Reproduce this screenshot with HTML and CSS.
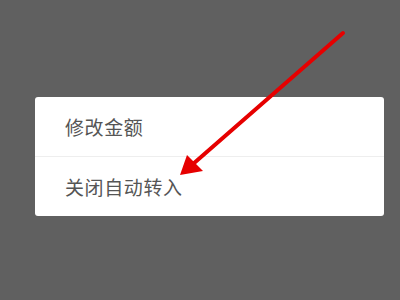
FILE: index.html
```html
<!DOCTYPE html>
<html lang="zh">
<head>
<meta charset="utf-8">
<link rel="stylesheet" href="styles.css">
</head>
<body>
<div class="screen">
  <div class="menu">
    <div class="item">修改金额</div>
    <div class="item">关闭自动转入</div>
  </div>
  <svg class="arrow" width="400" height="300" viewBox="0 0 400 300">
    <line x1="343" y1="33" x2="193" y2="164" stroke="#e60000" stroke-width="4" stroke-linecap="round"/>
    <polygon points="180,175 187,155 203,171" fill="#e60000"/>
  </svg>
</div>
</body>
</html>
```
FILE: styles.css
```css
html, body {
  margin: 0;
  padding: 0;
  background: #606060;
}
.screen {
  position: relative;
  width: 400px;
  height: 300px;
  padding-top: 97px;
  box-sizing: border-box;
}
.menu {
  margin-left: 35px;
  width: 349px;
  background: #ffffff;
  border-radius: 3px;
  display: flex;
  flex-direction: column;
}
.item {
  height: 59px;
  display: flex;
  align-items: center;
  padding-left: 30px;
  font-family: "Noto Sans CJK SC", sans-serif;
  font-size: 19px;
  letter-spacing: 0.6px;
  color: #555555;
}
.item + .item {
  border-top: 1px solid #eeeeee;
}
.arrow {
  position: absolute;
  left: 0;
  top: 0;
}
```
